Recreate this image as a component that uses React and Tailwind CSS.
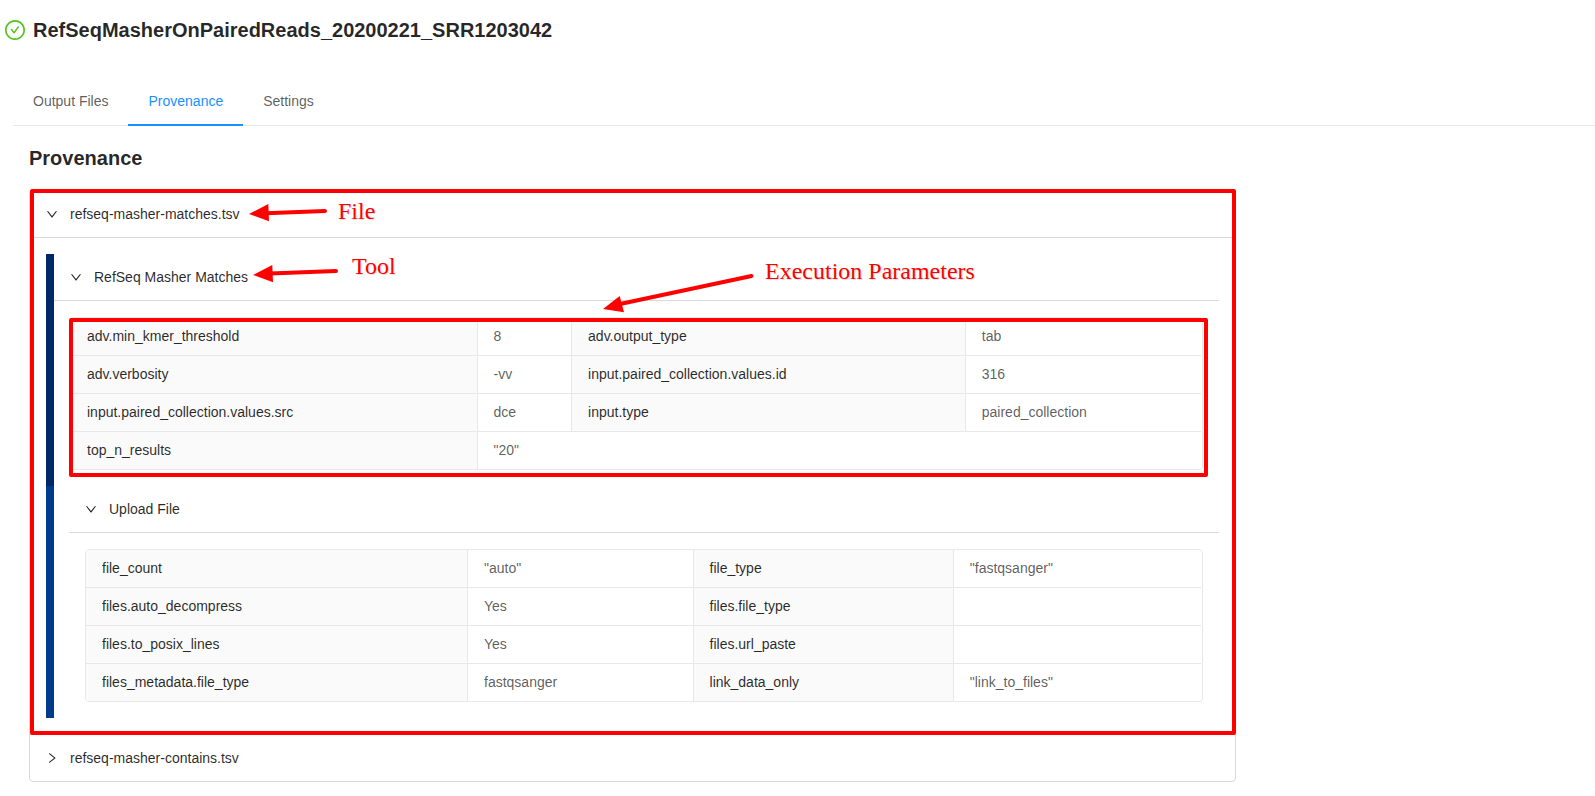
const tabs = ["Output Files", "Provenance", "Settings"];

const matchesParams = [
  ["adv.min_kmer_threshold", "8", "adv.output_type", "tab"],
  ["adv.verbosity", "-vv", "input.paired_collection.values.id", "316"],
  ["input.paired_collection.values.src", "dce", "input.type", "paired_collection"],
  ["top_n_results", '"20"'],
];

const uploadParams = [
  ["file_count", '"auto"', "file_type", '"fastqsanger"'],
  ["files.auto_decompress", "Yes", "files.file_type", ""],
  ["files.to_posix_lines", "Yes", "files.url_paste", ""],
  ["files_metadata.file_type", "fastqsanger", "link_data_only", '"link_to_files"'],
];

function Chevron({ open }) {
  return (
    <svg
      viewBox="64 64 896 896"
      className={open ? "size-3 shrink-0 rotate-90" : "size-3 shrink-0"}
      fill="currentColor"
      aria-hidden="true"
    >
      <path d="M765.7 486.8L314.9 134.7A7.97 7.97 0 0 0 302 141v77.3c0 4.9 2.3 9.6 6.1 12.6l360 281.1-360 281.1c-3.9 3-6.1 7.7-6.1 12.6V883c0 6.7 7.7 10.4 12.9 6.3l450.8-352.1a31.96 31.96 0 0 0 0-50.4z" />
    </svg>
  );
}

function PanelHeader({ open, children }) {
  return (
    <button
      type="button"
      aria-expanded={open}
      className="flex w-full items-center gap-3 px-4 py-3 text-left leading-[22px] text-black/85"
    >
      <Chevron open={open} />
      {children}
    </button>
  );
}

function Parameters({ rows }) {
  return (
    <div className="overflow-hidden rounded border border-[#e8e8e8] pr-px">
      <table className="w-full border-collapse text-left leading-[21px]">
        <tbody>
          {rows.map((row) => (
            <tr key={row[0]} className="border-b border-[#e8e8e8] last:border-b-0">
              {row.map((cell, i) =>
                i % 2 === 0 ? (
                  <th
                    key={i}
                    scope="row"
                    className="border-r border-[#e8e8e8] bg-[#fafafa] px-4 py-2 font-normal text-black/85"
                  >
                    {cell}
                  </th>
                ) : (
                  <td
                    key={i}
                    colSpan={row.length === 2 ? 3 : 1}
                    className="border-r border-[#e8e8e8] px-4 py-2 text-black/65 last:border-r-0 last:pr-[17px]"
                  >
                    {cell}
                  </td>
                )
              )}
            </tr>
          ))}
        </tbody>
      </table>
    </div>
  );
}

function Label({ className, children }) {
  return (
    <span
      className={`absolute whitespace-nowrap font-['Liberation_Serif',serif] text-2xl leading-7 text-[#f00] [text-shadow:1px_1px_1px_rgba(0,0,0,0.15)] ${className}`}
    >
      {children}
    </span>
  );
}

function Annotations() {
  return (
    <div className="pointer-events-none absolute inset-0">
      <svg className="absolute left-0 top-0 h-32 w-[760px]" viewBox="0 0 760 128" fill="#f00" stroke="#f00">
        <g strokeWidth="4" strokeLinecap="round">
          <path d="M236 22.3L295 20" />
          <path d="M240 82.5L306 80" />
          <path d="M590 113L721.5 85" />
        </g>
        <g stroke="none">
          <path d="M219 23L238.3 13L239 30.2Z" />
          <path d="M223 84L242.3 74L243 91.2Z" />
          <path d="M573 118L589.7 105L594 121.2Z" />
        </g>
      </svg>
      <Label className="left-[308px] top-1.5">File</Label>
      <Label className="left-[322px] top-[61px]">Tool</Label>
      <Label className="left-[735px] top-[66px]">Execution Parameters</Label>
      <div className="absolute -bottom-px -right-px -top-0.5 left-0 rounded-xs border-4 border-[#f00]" />
    </div>
  );
}

export default function App() {
  return (
    <div className="min-h-screen bg-white font-['Liberation_Sans',Arial,sans-serif] text-sm text-black/65">
      <header className="flex items-center gap-2 px-[5px] pt-4">
        <svg viewBox="64 64 896 896" className="size-5 shrink-0" fill="#52c41a" role="img" aria-label="Completed">
          <path d="M699 353h-46.9c-10.2 0-19.9 4.9-25.9 13.3L469 584.3l-71.2-98.8c-6-8.3-15.6-13.3-25.9-13.3H325c-6.5 0-10.3 7.4-6.5 12.7l124.6 172.8a31.8 31.8 0 0 0 51.7 0l210.6-292c3.9-5.3.1-12.7-6.4-12.7z" />
          <path d="M512 64C264.6 64 64 264.6 64 512s200.6 448 448 448 448-200.6 448-448S759.4 64 512 64zm0 820c-205.4 0-372-166.6-372-372s166.6-372 372-372 372 166.6 372 372-166.6 372-372 372z" />
        </svg>
        <h1 className="text-xl font-bold leading-7 text-black/85">RefSeqMasherOnPairedReads_20200221_SRR1203042</h1>
      </header>

      <nav className="ml-[13px] mt-[34px] flex border-b border-[#e8e8e8]" role="tablist">
        {tabs.map((tab) => (
          <button
            key={tab}
            type="button"
            role="tab"
            aria-selected={tab === "Provenance"}
            className="-mb-px border-b-2 border-transparent px-5 py-3 leading-[22px] aria-selected:border-[#1890ff] aria-selected:text-[#1890ff]"
          >
            {tab}
          </button>
        ))}
      </nav>

      <main className="pl-[29px] pt-[18px]">
        <h2 className="text-xl font-bold leading-7 text-black/85">Provenance</h2>

        <div className="mt-[18px] max-w-[1207px] rounded border border-[#d9d9d9]">
          <section className="relative border-b border-[#d9d9d9]">
            <PanelHeader open>refseq-masher-matches.tsv</PanelHeader>
            <div className="border-t border-[#d9d9d9] p-4">
              <section className="border-l-8 border-[#002766]">
                <PanelHeader open>RefSeq Masher Matches</PanelHeader>
                <div className="border-t border-[#d9d9d9] p-4">
                  <div className="relative">
                    <Parameters rows={matchesParams} />
                    <div className="pointer-events-none absolute -bottom-[7px] -left-px -right-[5px] top-px rounded-xs border-4 border-[#f00]" />
                  </div>
                </div>
              </section>
              <section className="border-l-8 border-[#003a8c] pl-[15px]">
                <PanelHeader open>Upload File</PanelHeader>
                <div className="border-t border-[#d9d9d9] p-4">
                  <Parameters rows={uploadParams} />
                </div>
              </section>
            </div>
            <Annotations />
          </section>
          <section>
            <PanelHeader open={false}>refseq-masher-contains.tsv</PanelHeader>
          </section>
        </div>
      </main>
    </div>
  );
}
